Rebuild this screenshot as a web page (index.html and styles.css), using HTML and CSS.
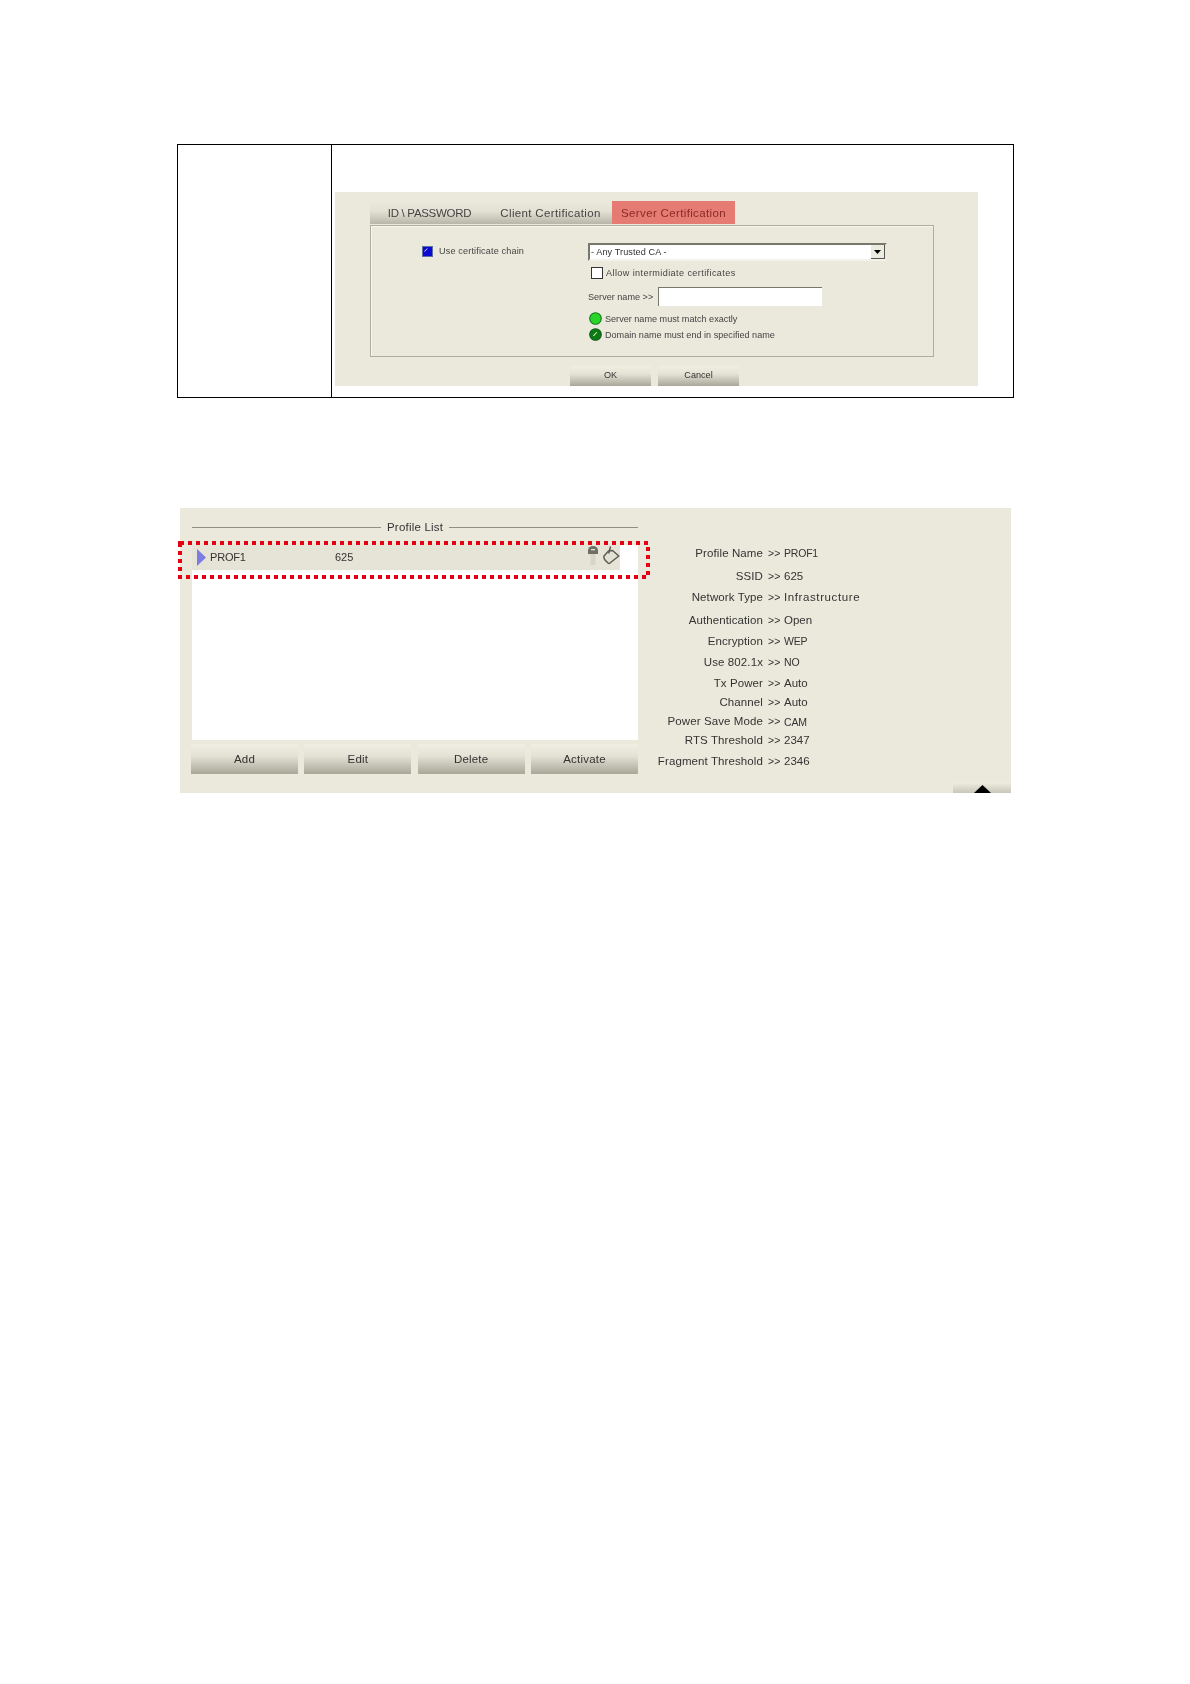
FILE: index.html
```html
<!DOCTYPE html>
<html lang="en">
<head>
<meta charset="utf-8">
<title>Server Certification and Profile List</title>
<link rel="stylesheet" href="styles.css">
</head>
<body>
<main class="page">
  <section class="doc-table">
    <div class="doc-label"></div>
    <div class="doc-cell">
      <div class="shot shot-cert">
        <div class="tabs">
          <div class="tab tab-id">ID \ PASSWORD</div>
          <div class="tab tab-client">Client Certification</div>
          <div class="tab tab-active">Server Certification</div>
        </div>
        <div class="cert-panel">
          <div class="chain">
            <span class="check-blue"><svg viewBox="0 0 11 11" width="11" height="11"><rect x="0.5" y="0.5" width="10" height="10" fill="#0a0ad2" stroke="#5f6f9f"/><path d="M2 5.5 5 2.5 5.8 2.5 3 5.5Z" fill="#fff"/></svg></span>
            <span>Use certificate chain</span>
          </div>
          <div class="cert-fields">
            <div class="select"><span class="select-text">- Any Trusted CA -</span><span class="select-btn"><svg viewBox="0 0 7 4" width="7" height="4"><path d="M0 0H7L3.5 4Z" fill="#000"/></svg></span></div>
            <div class="allow"><span class="checkbox"></span><span>Allow intermidiate certificates</span></div>
            <div class="server"><span class="server-label">Server name &gt;&gt;</span><span class="input"></span></div>
            <div class="radio-row"><svg class="radio" viewBox="0 0 13 13" width="13" height="13"><circle cx="6.5" cy="6.5" r="5.8" fill="#2ad52a" stroke="#0f7a1b" stroke-width="1.1"/></svg><span>Server name must match exactly</span></div>
            <div class="radio-row radio-second"><svg class="radio" viewBox="0 0 13 13" width="13" height="13"><circle cx="6.5" cy="6.5" r="5.8" fill="#0d7a14" stroke="#0d5a1b" stroke-width="1.1"/><path d="M4 7.5 7.5 4 8.2 4.6 4.8 8.2Z" fill="#d8f0d0"/></svg><span>Domain name must end in specified name</span></div>
          </div>
        </div>
        <div class="cert-actions">
          <div class="btn btn-small">OK</div>
          <div class="btn btn-small">Cancel</div>
        </div>
      </div>
    </div>
  </section>

  <section class="shot shot-profile">
    <div class="profile-left">
      <div class="legend"><span class="legend-line line-a"></span><span class="legend-text">Profile List</span><span class="legend-line"></span></div>
      <div class="list">
        <div class="list-row">
          <svg class="row-arrow" viewBox="0 0 9 17" width="9" height="17"><path d="M0 0 9 8.5 0 17Z" fill="#7c7ce2"/></svg>
          <span class="row-name">PROF1</span>
          <span class="row-ssid">625</span>
          <svg class="row-key" viewBox="0 0 10 19" width="10" height="19"><path d="M0 8V4.5a5 4.5 0 0 1 10 0V8Z" fill="#6e6e66"/><rect x="3" y="3" width="4" height="1.3" fill="#e6e4d6"/><rect x="2.5" y="8" width="5" height="11" fill="#d6d5ca"/></svg>
          <svg class="row-tag" viewBox="0 0 17 19" width="17" height="19"><path d="M5.5 5 1 10Q.5 12 2 14L5 17Q6 17.8 7 17L15.8 10 9.5 4.5Z" fill="#e2e1d6" stroke="#5c5c55" stroke-width="1.5" stroke-linejoin="round"/><path d="M7.6 0.5 5.6 7.5" fill="none" stroke="#5c5c55" stroke-width="1.5"/></svg>
        </div>
      </div>
      <div class="actions">
        <div class="btn">Add</div>
        <div class="btn">Edit</div>
        <div class="btn">Delete</div>
        <div class="btn">Activate</div>
      </div>
    </div>
    <dl class="info">
      <dt>Profile Name</dt><dd class="caps">PROF1</dd>
      <dt>SSID</dt><dd>625</dd>
      <dt>Network Type</dt><dd class="wide">Infrastructure</dd>
      <dt>Authentication</dt><dd>Open</dd>
      <dt>Encryption</dt><dd class="caps">WEP</dd>
      <dt>Use 802.1x</dt><dd class="caps">NO</dd>
      <dt>Tx Power</dt><dd>Auto</dd>
      <dt>Channel</dt><dd>Auto</dd>
      <dt>Power Save Mode</dt><dd class="caps low">CAM</dd>
      <dt>RTS Threshold</dt><dd>2347</dd>
      <dt>Fragment Threshold</dt><dd>2346</dd>
    </dl>
    <svg class="highlight" viewBox="0 0 472 38" width="472" height="38"><rect x="2" y="2" width="468" height="34" fill="none" stroke="#e60012" stroke-width="4" stroke-dasharray="4 4"/></svg>
    <div class="collapse"><svg viewBox="0 0 17 8" width="17" height="8"><path d="M8.5 0 17 8H0Z" fill="#000"/></svg></div>
  </section>
</main>
</body>
</html>
```
FILE: styles.css
```css
* { box-sizing: border-box; }
html, body { margin: 0; padding: 0; background: #fff; }
body { font-family: "Liberation Sans", Arial, sans-serif; color: #333; }
.page { width: 1190px; height: 1684px; padding-top: 144px; }

.doc-table {
  margin-left: 177px;
  width: 837px;
  height: 254px;
  border: 1px solid #000;
  display: grid;
  grid-template-columns: 154px 1fr;
}
.doc-label { border-right: 1px solid #000; }
.doc-cell { padding: 47px 0 0 3px; }

.shot { background: #ebe9dc; filter: blur(0.25px); }

.shot-cert { width: 643px; height: 194px; padding: 9px 0 0 35px; }
.tabs { display: flex; height: 23px; font-size: 11.5px; letter-spacing: 0.35px; color: #444; }
.tab { display: flex; align-items: center; justify-content: center; background: linear-gradient(#ebe9dc, #e3e1d4 45%, #b8b6a8); }
.tab-id { width: 119px; letter-spacing: -0.3px; }
.tab-client { width: 123px; }
.tab-active { width: 123px; background: #e57b72; color: #8a2a26; }

.cert-panel {
  width: 564px;
  height: 132px;
  margin-top: 1px;
  border: 1px solid #aeae9f;
  box-shadow: inset 1px 1px 0 #f8f7ee;
  display: grid;
  grid-template-columns: 217px 1fr;
  font-size: 9.1px;
  color: #444;
}
.chain { display: flex; align-items: flex-start; gap: 6px; padding: 20px 0 0 51px; line-height: 10px; letter-spacing: 0.15px; }
.check-blue { display: block; width: 11px; height: 11px; }
.check-blue svg { display: block; }
.cert-fields { padding-top: 17px; display: flex; flex-direction: column; }
.select {
  width: 299px; height: 18px;
  background: #fff;
  border: 2px solid #77776c;
  border-right-color: #ebe9dc;
  border-bottom-color: #f4f3ea;
  display: flex; align-items: center; justify-content: space-between;
  padding-left: 1px;
  color: #333;
  letter-spacing: 0.1px;
}
.select-btn { width: 14px; height: 14px; background: #ecebe0; border-right: 1px solid #555; border-bottom: 1px solid #555; display: flex; align-items: center; justify-content: center; }
.select-btn svg { display: block; }
.allow { display: flex; align-items: center; gap: 3px; height: 12px; margin: 6px 0 0 3px; letter-spacing: 0.4px; }
.checkbox { width: 12px; height: 12px; background: #fff; border: 1px solid #333; }
.server { display: flex; align-items: center; gap: 6px; height: 19px; margin-top: 8px; }
.server-label { width: 64px; white-space: nowrap; }
.input { width: 164px; height: 19px; background: #fff; border-top: 1px solid #77776c; border-left: 1px solid #77776c; }
.radio-row { display: flex; align-items: center; gap: 3px; height: 13px; margin: 6px 0 0 1px; }
.radio-second { margin-top: 3px; }
.radio { display: block; flex: none; }
.cert-actions { display: flex; gap: 7px; margin: 9px 0 0 200px; }

.btn {
  display: flex; align-items: center; justify-content: center;
  background: linear-gradient(#efeee2, #e4e2d5 40%, #a9a798);
  color: #333;
}
.btn-small { width: 81px; height: 20px; font-size: 9.1px; padding-bottom: 2px; }

.shot-profile {
  position: relative;
  margin: 110px 0 0 180px;
  width: 831px;
  height: 285px;
  display: flex;
}
.profile-left { width: 458px; padding: 11px 0 0 12px; flex: none; }
.legend { display: flex; align-items: center; gap: 6px; height: 16px; font-size: 11.5px; letter-spacing: 0.2px; color: #333; }
.legend-line { flex: 1; height: 1px; background: #8f8f82; }
.line-a { flex: none; width: 189px; }
.list { width: 446px; height: 195px; margin-top: 10px; background: #fff; }
.list-row { width: 428px; height: 25px; background: #e6e4d6; display: flex; align-items: center; padding: 0 0 1px 5px; font-size: 11px; color: #333; }
.row-arrow { display: block; flex: none; }
.row-name { margin-left: 4px; width: 125px; letter-spacing: -0.2px; }
.row-ssid { width: 253px; }
.row-key { display: block; flex: none; margin-top: -4px; }
.row-tag { display: block; flex: none; margin: -3px 0 0 5px; }
.actions { display: grid; width: 447px; margin-left: -1px; grid-template-columns: repeat(4, 1fr); column-gap: 6.3px; margin-top: 4px; }
.actions .btn { height: 30px; font-size: 11.5px; letter-spacing: 0.2px; }

.info {
  margin: 35px 0 0 0;
  display: grid;
  grid-template-columns: 146px auto;
  grid-template-rows: 23px 21px 23px 21px 21px 21px 19px 19px 19px 21px 20px;
  justify-content: start;
  align-content: start;
  font-size: 11.5px;
  line-height: 20px;
  color: #333;
}
.info dt { text-align: right; white-space: nowrap; letter-spacing: 0.1px; }
.info dt::after { content: ">>"; display: inline-block; width: 16px; text-align: left; margin-left: 5px; font-size: 10.5px; letter-spacing: 0; }
.info dd { margin: 0; white-space: nowrap; }
.info .caps { font-size: 10.5px; letter-spacing: -0.2px; }
.info .wide { letter-spacing: 0.6px; }
.info .low { padding-top: 1px; }

.highlight { position: absolute; left: -2px; top: 33px; display: block; }
.collapse {
  position: absolute; right: 0; bottom: 0;
  width: 58px; height: 11px;
  background: linear-gradient(#efeee2, #c9c7b9);
  display: flex; align-items: flex-end; justify-content: center;
}
.collapse svg { display: block; }
```
